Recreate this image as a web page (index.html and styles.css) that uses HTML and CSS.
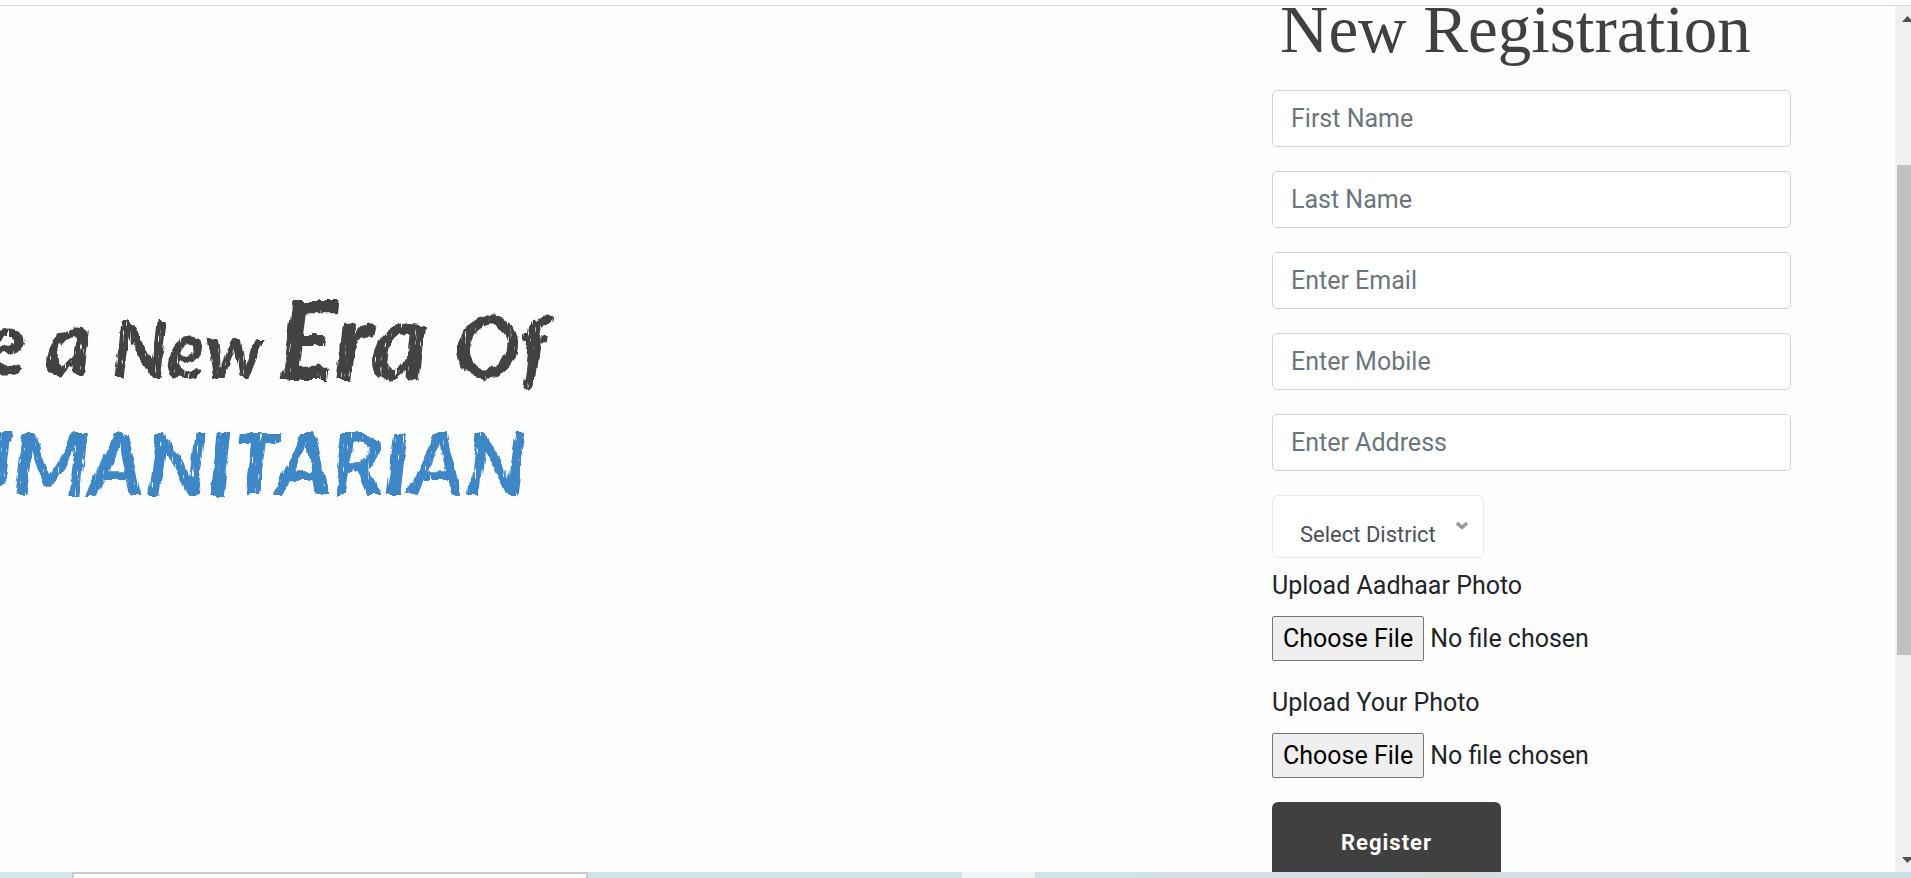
FILE: index.html
```
<!DOCTYPE html>
<html lang="en">
<head>
<meta charset="utf-8">
<title>New Registration</title>
<link rel="stylesheet" href="styles.css">
</head>
<body>
<header class="topbar"></header>
<div class="viewport">
  <main class="page">
    <section class="hero">
      <svg class="slogan" viewBox="0 0 560 250" role="img" aria-label="a New Era Of Humanitarian">
        <defs>
          <filter id="brush" x="-5%" y="-20%" width="110%" height="140%">
            <feTurbulence type="fractalNoise" baseFrequency="0.09 0.03" numOctaves="3" seed="4" result="n"/>
            <feDisplacementMap in="SourceGraphic" in2="n" scale="9" xChannelSelector="R" yChannelSelector="G" result="rough"/>
            <feTurbulence type="fractalNoise" baseFrequency="0.4 0.08" numOctaves="2" seed="9" result="s"/>
            <feColorMatrix in="s" type="matrix" values="0 0 0 0 0  0 0 0 0 0  0 0 0 0 0  0 0 0 -9 7.2" result="streaks"/>
            <feComposite in="rough" in2="streaks" operator="in"/>
          </filter>
        </defs>
        <g class="slogan-dark" filter="url(#brush)">
          <text x="27" y="95" text-anchor="end">e</text>
          <text x="44" y="95">a</text>
          <text class="slogan-new" x="112" y="98">New</text>
          <text class="slogan-era" x="278" y="100">Era</text>
          <text class="slogan-of" x="455" y="98">Of</text>
        </g>
        <g class="slogan-blue" filter="url(#brush)">
          <text x="527" y="215" text-anchor="end">UMANITARIAN</text>
        </g>
      </svg>
    </section>
    <form class="register">
      <h1 class="title">New Registration</h1>
      <div class="fields">
        <input class="field" type="text" placeholder="First Name" aria-label="First Name">
        <input class="field" type="text" placeholder="Last Name" aria-label="Last Name">
        <input class="field" type="email" placeholder="Enter Email" aria-label="Enter Email">
        <input class="field" type="tel" placeholder="Enter Mobile" aria-label="Enter Mobile">
        <input class="field" type="text" placeholder="Enter Address" aria-label="Enter Address">
      </div>
      <div class="district">
        <select class="district-select" aria-label="Select District"><option>Select District</option></select>
        <svg class="chevron" viewBox="0 0 12 9" aria-hidden="true"><path d="M1 2 6 6.500 11 2" fill="none" stroke="#999" stroke-width="3.500"/></svg>
      </div>
      <div class="upload">
        <label for="aadhaar">Upload Aadhaar Photo</label>
        <input class="file" id="aadhaar" type="file">
      </div>
      <div class="upload">
        <label for="photo">Upload Your Photo</label>
        <input class="file" id="photo" type="file">
      </div>
      <button class="submit" type="button">Register</button>
    </form>
  </main>
  <div class="scrollbar" aria-hidden="true">
    <svg class="arrow" viewBox="0 0 11 6"><path d="M0 6 5.500 0 11 6Z" fill="#505050"/></svg>
    <div class="track"><div class="thumb"></div></div>
    <svg class="arrow" viewBox="0 0 11 6"><path d="M0 0 5.500 6 11 0Z" fill="#505050"/></svg>
  </div>
</div>
<footer class="taskbar"><div class="task-search"></div><div class="task-active"></div></footer>
</body>
</html>
```
FILE: styles.css
```
* { box-sizing: border-box; }
body {
  margin: 0;
  height: 100vh;
  display: flex;
  flex-direction: column;
  overflow: hidden;
  background: #fefefe;
  color: #212529;
  font: 25px/36px Roboto, "Open Sans", sans-serif;
}
.topbar { flex: none; height: 6px; border-bottom: 1px solid #d9d9d9; background: #fff; }
.viewport { flex: 1; min-height: 0; display: flex; }
.page {
  flex: 1;
  min-width: 0;
  overflow: hidden;
  display: flex;
  justify-content: space-between;
  padding-right: 104px;
}
.hero { padding-top: 274px; }
.slogan { display: block; width: 560px; overflow: hidden; }
.slogan text { font-family: Lato, "Open Sans", sans-serif; font-style: italic; font-weight: 900; }
.slogan-dark { fill: #424242; font-size: 90px; }
.slogan-new { font-size: 78px; }
.slogan-era { font-size: 108px; }
.slogan-of { font-size: 86px; }
.slogan-blue { fill: #3b87c8; font-size: 86px; }

.register { flex: none; width: 519px; }
.title {
  margin: 0 0 38px 8px;
  color: #404040;
  font: 400 67px/46px "Liberation Serif", serif;
  white-space: nowrap;
}
.fields { display: grid; gap: 24px; }
.field {
  width: 100%;
  height: 57px;
  padding: 0 18px;
  border: 1px solid #ced4da;
  border-radius: 5px;
  background: #fff;
  color: #495057;
  font: inherit;
}
.field::placeholder { color: #6c757d; opacity: 1; }
.district { position: relative; width: 212px; margin: 24px 0 10px; }
.district-select {
  display: block;
  width: 100%;
  height: 63px;
  padding: 16px 0 0 27px;
  border: 1px solid #e8e8e8;
  border-radius: 6px;
  appearance: none;
  background: #fff;
  color: #495057;
  font: inherit;
  font-size: 22px;
}
.chevron { position: absolute; right: 16px; top: 26px; width: 12px; height: 9px; }
.upload { display: grid; gap: 12px; margin-bottom: 24px; }
.file { display: block; width: 100%; height: 45px; font: inherit; color: inherit; }
.file::file-selector-button {
  height: 45px;
  margin-right: 6px;
  padding: 0 10px;
  border: 1px solid #767676;
  border-radius: 2px;
  background: #efefef;
  color: #000;
  font: inherit;
}
.submit {
  width: 229px;
  height: 82px;
  border: 0;
  border-radius: 6px;
  background: #404040;
  color: #fff;
  font: inherit;
  font-size: 22px;
  font-weight: 700;
  letter-spacing: 1px;
}

.scrollbar {
  flex: none;
  width: 16px;
  padding: 10px 0 9px 2px;
  display: flex;
  flex-direction: column;
  background: #f0f0f0;
  overflow: hidden;
}
.arrow { flex: none; width: 11px; height: 6px; margin-left: 5px; }
.track { flex: 1; display: flex; flex-direction: column; padding: 143px 0 202px; }
.thumb { flex: 1; background: #c1c1c1; }

.taskbar {
  flex: none;
  height: 6px;
  display: flex;
  overflow: hidden;
  padding-left: 72px;
  background: linear-gradient(90deg, #d4e5ec 0%, #d0e4ea 50%, #d2e0e8 65%, #d3e0e6 72%, #dcdad8 76%, #d2e0e7 80%, #cddfe6 100%);
}
.task-search { width: 516px; height: 40px; border: 2px solid #cacaca; background: #fff; }
.task-active { width: 73px; margin-left: 374px; background: #ecf4f6; }
```
